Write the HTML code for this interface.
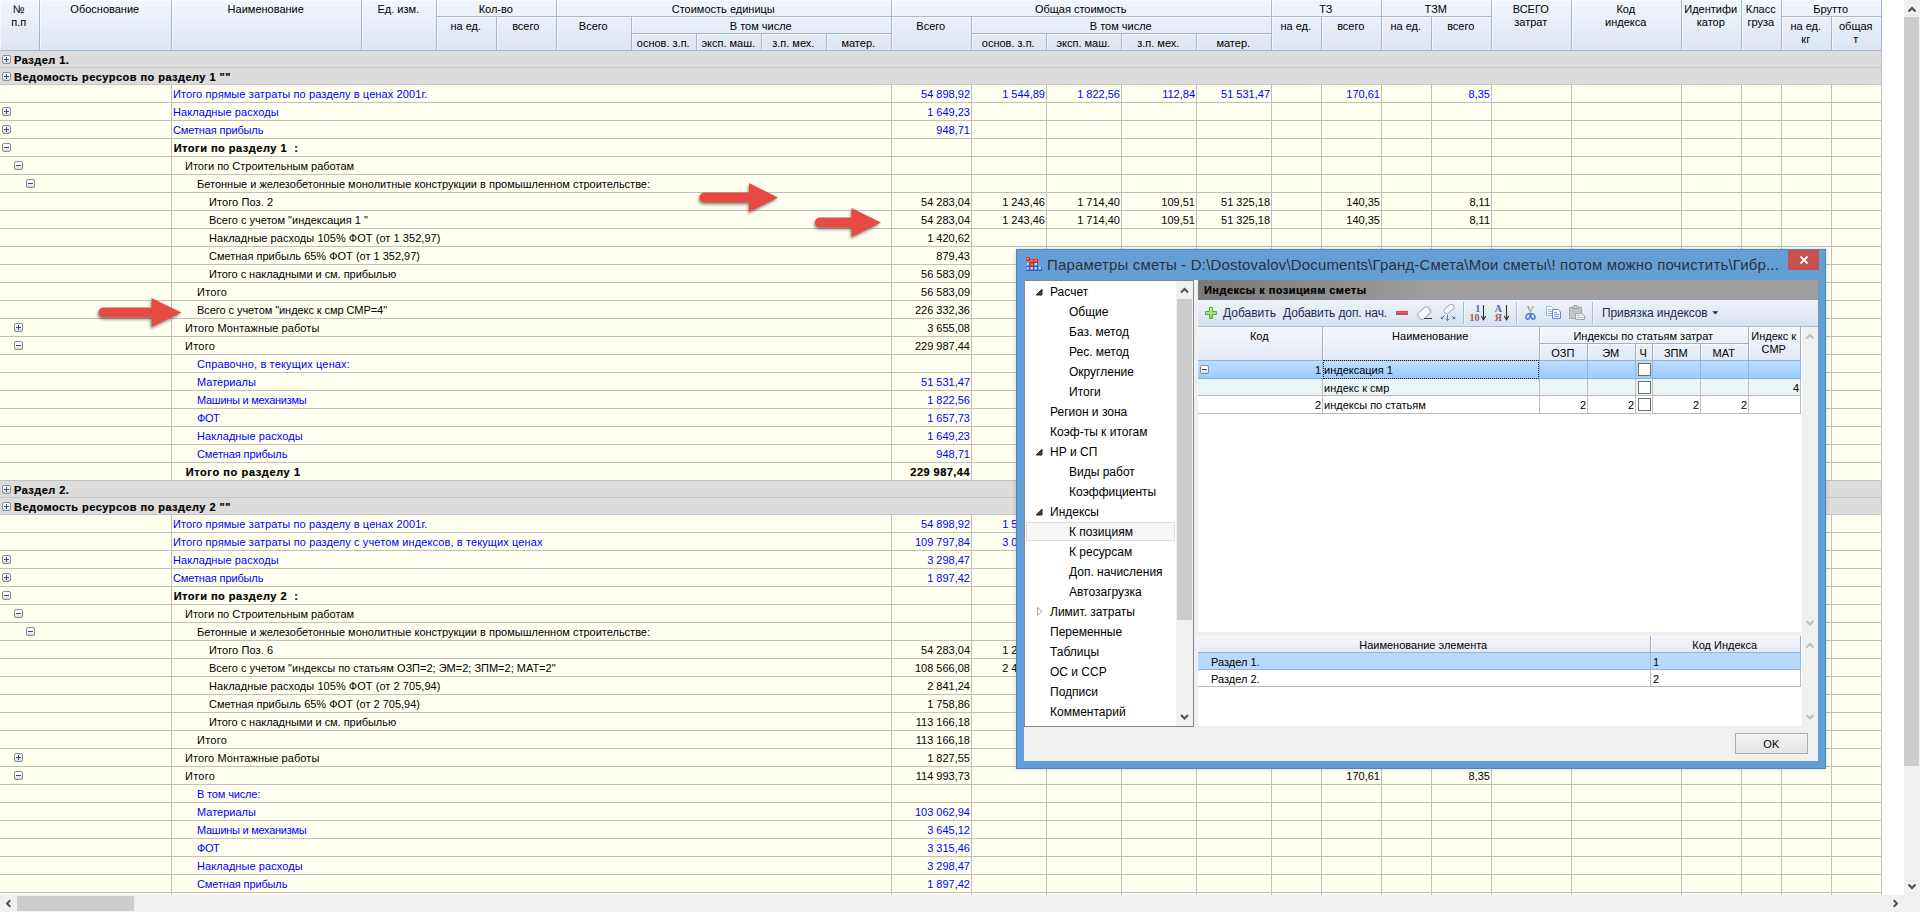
<!DOCTYPE html><html><head><meta charset="utf-8"><title>Параметры сметы</title><style>
*{box-sizing:border-box;margin:0;padding:0}
html,body{width:1920px;height:912px;overflow:hidden;background:#fff}
body{font-family:"Liberation Sans",sans-serif;font-size:11px;color:#000;position:relative}
.a{position:absolute}
.t{position:absolute;white-space:pre;line-height:13px;height:13px}
.b{font-weight:bold;letter-spacing:.46px;-webkit-text-stroke:.2px #000}
.bl{color:#0000ff}
.r{text-align:right}
.c{text-align:center}
#sheet{position:absolute;left:0;top:0;width:1904px;height:895px;overflow:hidden;background:#fff}
.hc.g{background-image:linear-gradient(#f3f7fc 0%,#ecf1f9 45%,#dfe8f4 100%);background-size:100% 34px;border-color:#a3b1c6}
.hc.g2{background-size:100% 17px}
.hc{position:absolute;background:linear-gradient(#f2f6fc 0%,#eaf0f9 36%,#dbe5f2 100%) no-repeat;background-size:100% 51px;border-right:1px solid #a9b8d1;border-bottom:1px solid #a9b8d1;text-align:center;line-height:13px;color:#000;overflow:hidden;box-shadow:inset 1px 1px 0 rgba(255,255,255,.55);padding-right:1.5px}
.row{position:absolute;left:0;width:1882px;height:18px;background:#fffff0;border-bottom:1px solid #c0c0c0}
.sec{position:absolute;left:0;width:1882px;height:17px;background:#dcdcdc;border-bottom:1px solid #c6c6c6;border-right:1px solid #c0c0c0}
.vl{position:absolute;width:1px;background:#c0c0c0}
.ex{position:absolute;width:9px;height:9px;border:1px solid #8e8e8e;border-radius:2px;background:linear-gradient(#ffffff 40%,#d8d8d8)}
.ex i{position:absolute;left:1px;top:3px;width:5px;height:1px;background:#274b9b}
.ex b{position:absolute;left:3px;top:1px;width:1px;height:5px;background:#274b9b}

</style></head><body><div id="sheet">
<div class="hc" style="left:0px;top:0px;width:40px;height:51px;padding-top:3px;background-position:0 0px">№<br>п.п</div>
<div class="hc" style="left:40px;top:0px;width:132px;height:51px;padding-top:3px;background-position:0 0px">Обоснование</div>
<div class="hc" style="left:172px;top:0px;width:190px;height:51px;padding-top:3px;background-position:0 0px">Наименование</div>
<div class="hc" style="left:362px;top:0px;width:75px;height:51px;padding-top:3px;background-position:0 0px">Ед. изм.</div>
<div class="hc" style="left:437px;top:0px;width:120px;height:17px;padding-top:3px;background-position:0 0px">Кол-во</div>
<div class="hc" style="left:437px;top:17px;width:60px;height:34px;padding-top:3px;background-position:0 -17px">на ед.</div>
<div class="hc" style="left:497px;top:17px;width:60px;height:34px;padding-top:3px;background-position:0 -17px">всего</div>
<div class="hc" style="left:557px;top:0px;width:335px;height:17px;padding-top:3px;background-position:0 0px">Стоимость единицы</div>
<div class="hc" style="left:557px;top:17px;width:75px;height:34px;padding-top:3px;background-position:0 -17px">Всего</div>
<div class="hc" style="left:632px;top:17px;width:260px;height:17px;padding-top:3px;background-position:0 -17px">В том числе</div>
<div class="hc" style="left:632px;top:34px;width:65px;height:17px;padding-top:3px;background-position:0 -34px">основ. з.п.</div>
<div class="hc" style="left:697px;top:34px;width:65px;height:17px;padding-top:3px;background-position:0 -34px">эксп. маш.</div>
<div class="hc" style="left:762px;top:34px;width:65px;height:17px;padding-top:3px;background-position:0 -34px">з.п. мех.</div>
<div class="hc" style="left:827px;top:34px;width:65px;height:17px;padding-top:3px;background-position:0 -34px">матер.</div>
<div class="hc" style="left:892px;top:0px;width:380px;height:17px;padding-top:3px;background-position:0 0px">Общая стоимость</div>
<div class="hc" style="left:892px;top:17px;width:80px;height:34px;padding-top:3px;background-position:0 -17px">Всего</div>
<div class="hc" style="left:972px;top:17px;width:300px;height:17px;padding-top:3px;background-position:0 -17px">В том числе</div>
<div class="hc" style="left:972px;top:34px;width:75px;height:17px;padding-top:3px;background-position:0 -34px">основ. з.п.</div>
<div class="hc" style="left:1047px;top:34px;width:75px;height:17px;padding-top:3px;background-position:0 -34px">эксп. маш.</div>
<div class="hc" style="left:1122px;top:34px;width:75px;height:17px;padding-top:3px;background-position:0 -34px">з.п. мех.</div>
<div class="hc" style="left:1197px;top:34px;width:75px;height:17px;padding-top:3px;background-position:0 -34px">матер.</div>
<div class="hc" style="left:1272px;top:0px;width:110px;height:17px;padding-top:3px;background-position:0 0px">ТЗ</div>
<div class="hc" style="left:1272px;top:17px;width:50px;height:34px;padding-top:3px;background-position:0 -17px">на ед.</div>
<div class="hc" style="left:1322px;top:17px;width:60px;height:34px;padding-top:3px;background-position:0 -17px">всего</div>
<div class="hc" style="left:1382px;top:0px;width:110px;height:17px;padding-top:3px;background-position:0 0px">ТЗМ</div>
<div class="hc" style="left:1382px;top:17px;width:50px;height:34px;padding-top:3px;background-position:0 -17px">на ед.</div>
<div class="hc" style="left:1432px;top:17px;width:60px;height:34px;padding-top:3px;background-position:0 -17px">всего</div>
<div class="hc" style="left:1492px;top:0px;width:80px;height:51px;padding-top:3px;background-position:0 0px">ВСЕГО<br>затрат</div>
<div class="hc" style="left:1572px;top:0px;width:110px;height:51px;padding-top:3px;background-position:0 0px">Код<br>индекса</div>
<div class="hc" style="left:1682px;top:0px;width:60px;height:51px;padding-top:3px;background-position:0 0px">Идентифи<br>катор</div>
<div class="hc" style="left:1742px;top:0px;width:40px;height:51px;padding-top:3px;background-position:0 0px">Класс<br>груза</div>
<div class="hc" style="left:1782px;top:0px;width:100px;height:17px;padding-top:3px;background-position:0 0px">Брутто</div>
<div class="hc" style="left:1782px;top:17px;width:50px;height:34px;padding-top:3px;background-position:0 -17px">на ед.<br>кг</div>
<div class="hc" style="left:1832px;top:17px;width:50px;height:34px;padding-top:3px;background-position:0 -17px">общая<br>т</div>
<div class="sec" style="top:51px"></div>
<div class="ex" style="left:2px;top:55px"><i></i><b></b></div>
<div class="t b" style="left:14px;top:54px">Раздел 1.</div>
<div class="sec" style="top:68px"></div>
<div class="ex" style="left:2px;top:72px"><i></i><b></b></div>
<div class="t b" style="left:14px;top:71px">Ведомость ресурсов по разделу 1 ""</div>
<div class="row" style="top:85px"></div>
<div class="t bl" style="left:173px;top:88px;letter-spacing:0.1px">Итого прямые затраты по разделу в ценах 2001г.</div>
<div class="t r bl" style="left:890px;width:80px;top:88px">54 898,92</div>
<div class="t r bl" style="left:965px;width:80px;top:88px">1 544,89</div>
<div class="t r bl" style="left:1040px;width:80px;top:88px">1 822,56</div>
<div class="t r bl" style="left:1115px;width:80px;top:88px">112,84</div>
<div class="t r bl" style="left:1190px;width:80px;top:88px">51 531,47</div>
<div class="t r bl" style="left:1300px;width:80px;top:88px">170,61</div>
<div class="t r bl" style="left:1410px;width:80px;top:88px">8,35</div>
<div class="row" style="top:103px"></div>
<div class="ex" style="left:2px;top:107px"><i></i><b></b></div>
<div class="t bl" style="left:173px;top:106px;letter-spacing:0.07px">Накладные расходы</div>
<div class="t r bl" style="left:890px;width:80px;top:106px">1 649,23</div>
<div class="row" style="top:121px"></div>
<div class="ex" style="left:2px;top:125px"><i></i><b></b></div>
<div class="t bl" style="left:173px;top:124px;letter-spacing:-0.12px">Сметная прибыль</div>
<div class="t r bl" style="left:890px;width:80px;top:124px">948,71</div>
<div class="row" style="top:139px"></div>
<div class="ex" style="left:2px;top:143px"><i></i></div>
<div class="t b" style="left:173.7px;top:142px;letter-spacing:0.5px">Итоги по разделу 1  :</div>
<div class="row" style="top:157px"></div>
<div class="ex" style="left:14px;top:161px"><i></i></div>
<div class="t " style="left:185px;top:160px">Итоги по Строительным работам</div>
<div class="row" style="top:175px"></div>
<div class="ex" style="left:26px;top:179px"><i></i></div>
<div class="t " style="left:197px;top:178px">Бетонные и железобетонные монолитные конструкции в промышленном строительстве:</div>
<div class="row" style="top:193px"></div>
<div class="t " style="left:209px;top:196px;letter-spacing:0.1px">Итого Поз. 2</div>
<div class="t r " style="left:890px;width:80px;top:196px">54 283,04</div>
<div class="t r " style="left:965px;width:80px;top:196px">1 243,46</div>
<div class="t r " style="left:1040px;width:80px;top:196px">1 714,40</div>
<div class="t r " style="left:1115px;width:80px;top:196px">109,51</div>
<div class="t r " style="left:1190px;width:80px;top:196px">51 325,18</div>
<div class="t r " style="left:1300px;width:80px;top:196px">140,35</div>
<div class="t r " style="left:1410px;width:80px;top:196px">8,11</div>
<div class="row" style="top:211px"></div>
<div class="t " style="left:209px;top:214px">Всего с учетом "индексация 1 "</div>
<div class="t r " style="left:890px;width:80px;top:214px">54 283,04</div>
<div class="t r " style="left:965px;width:80px;top:214px">1 243,46</div>
<div class="t r " style="left:1040px;width:80px;top:214px">1 714,40</div>
<div class="t r " style="left:1115px;width:80px;top:214px">109,51</div>
<div class="t r " style="left:1190px;width:80px;top:214px">51 325,18</div>
<div class="t r " style="left:1300px;width:80px;top:214px">140,35</div>
<div class="t r " style="left:1410px;width:80px;top:214px">8,11</div>
<div class="row" style="top:229px"></div>
<div class="t " style="left:209px;top:232px;letter-spacing:0.05px">Накладные расходы 105% ФОТ (от 1 352,97)</div>
<div class="t r " style="left:890px;width:80px;top:232px">1 420,62</div>
<div class="row" style="top:247px"></div>
<div class="t " style="left:209px;top:250px">Сметная прибыль 65% ФОТ (от 1 352,97)</div>
<div class="t r " style="left:890px;width:80px;top:250px">879,43</div>
<div class="row" style="top:265px"></div>
<div class="t " style="left:209px;top:268px;letter-spacing:-0.04px">Итого с накладными и см. прибылью</div>
<div class="t r " style="left:890px;width:80px;top:268px">56 583,09</div>
<div class="row" style="top:283px"></div>
<div class="t " style="left:197px;top:286px;letter-spacing:0.25px">Итого</div>
<div class="t r " style="left:890px;width:80px;top:286px">56 583,09</div>
<div class="row" style="top:301px"></div>
<div class="t " style="left:197px;top:304px;letter-spacing:-0.06px">Всего с учетом "индекс к смр СМР=4"</div>
<div class="t r " style="left:890px;width:80px;top:304px">226 332,36</div>
<div class="row" style="top:319px"></div>
<div class="ex" style="left:14px;top:323px"><i></i><b></b></div>
<div class="t " style="left:185px;top:322px;letter-spacing:0.1px">Итого Монтажные работы</div>
<div class="t r " style="left:890px;width:80px;top:322px">3 655,08</div>
<div class="row" style="top:337px"></div>
<div class="ex" style="left:14px;top:341px"><i></i></div>
<div class="t " style="left:185px;top:340px;letter-spacing:0.25px">Итого</div>
<div class="t r " style="left:890px;width:80px;top:340px">229 987,44</div>
<div class="row" style="top:355px"></div>
<div class="t bl" style="left:197px;top:358px;letter-spacing:0.15px">Справочно, в текущих ценах:</div>
<div class="row" style="top:373px"></div>
<div class="t bl" style="left:197px;top:376px">Материалы</div>
<div class="t r bl" style="left:890px;width:80px;top:376px">51 531,47</div>
<div class="row" style="top:391px"></div>
<div class="t bl" style="left:197px;top:394px;letter-spacing:-0.27px">Машины и механизмы</div>
<div class="t r bl" style="left:890px;width:80px;top:394px">1 822,56</div>
<div class="row" style="top:409px"></div>
<div class="t bl" style="left:197px;top:412px;letter-spacing:-0.4px">ФОТ</div>
<div class="t r bl" style="left:890px;width:80px;top:412px">1 657,73</div>
<div class="row" style="top:427px"></div>
<div class="t bl" style="left:197px;top:430px;letter-spacing:0.07px">Накладные расходы</div>
<div class="t r bl" style="left:890px;width:80px;top:430px">1 649,23</div>
<div class="row" style="top:445px"></div>
<div class="t bl" style="left:197px;top:448px;letter-spacing:-0.12px">Сметная прибыль</div>
<div class="t r bl" style="left:890px;width:80px;top:448px">948,71</div>
<div class="row" style="top:463px"></div>
<div class="t b" style="left:185.7px;top:466px;letter-spacing:0.6px">Итого по разделу 1</div>
<div class="t r b" style="left:890px;width:80px;top:466px">229 987,44</div>
<div class="sec" style="top:481px"></div>
<div class="ex" style="left:2px;top:485px"><i></i><b></b></div>
<div class="t b" style="left:14px;top:484px">Раздел 2.</div>
<div class="sec" style="top:498px"></div>
<div class="ex" style="left:2px;top:502px"><i></i><b></b></div>
<div class="t b" style="left:14px;top:501px">Ведомость ресурсов по разделу 2 ""</div>
<div class="row" style="top:515px"></div>
<div class="t bl" style="left:173px;top:518px;letter-spacing:0.1px">Итого прямые затраты по разделу в ценах 2001г.</div>
<div class="t r bl" style="left:890px;width:80px;top:518px">54 898,92</div>
<div class="t r bl" style="left:965px;width:80px;top:518px">1 544,89</div>
<div class="t r bl" style="left:1040px;width:80px;top:518px">1 822,56</div>
<div class="t r bl" style="left:1115px;width:80px;top:518px">112,84</div>
<div class="t r bl" style="left:1190px;width:80px;top:518px">51 531,47</div>
<div class="t r bl" style="left:1300px;width:80px;top:518px">170,61</div>
<div class="t r bl" style="left:1410px;width:80px;top:518px">8,35</div>
<div class="row" style="top:533px"></div>
<div class="t bl" style="left:173px;top:536px;letter-spacing:0.11px">Итого прямые затраты по разделу с учетом индексов, в текущих ценах</div>
<div class="t r bl" style="left:890px;width:80px;top:536px">109 797,84</div>
<div class="t r bl" style="left:965px;width:80px;top:536px">3 089,78</div>
<div class="t r bl" style="left:1040px;width:80px;top:536px">3 645,12</div>
<div class="t r bl" style="left:1115px;width:80px;top:536px">225,68</div>
<div class="t r bl" style="left:1190px;width:80px;top:536px">103 062,94</div>
<div class="t r bl" style="left:1300px;width:80px;top:536px">170,61</div>
<div class="t r bl" style="left:1410px;width:80px;top:536px">8,35</div>
<div class="row" style="top:551px"></div>
<div class="ex" style="left:2px;top:555px"><i></i><b></b></div>
<div class="t bl" style="left:173px;top:554px;letter-spacing:0.07px">Накладные расходы</div>
<div class="t r bl" style="left:890px;width:80px;top:554px">3 298,47</div>
<div class="row" style="top:569px"></div>
<div class="ex" style="left:2px;top:573px"><i></i><b></b></div>
<div class="t bl" style="left:173px;top:572px;letter-spacing:-0.12px">Сметная прибыль</div>
<div class="t r bl" style="left:890px;width:80px;top:572px">1 897,42</div>
<div class="row" style="top:587px"></div>
<div class="ex" style="left:2px;top:591px"><i></i></div>
<div class="t b" style="left:173.7px;top:590px;letter-spacing:0.5px">Итоги по разделу 2  :</div>
<div class="row" style="top:605px"></div>
<div class="ex" style="left:14px;top:609px"><i></i></div>
<div class="t " style="left:185px;top:608px">Итоги по Строительным работам</div>
<div class="row" style="top:623px"></div>
<div class="ex" style="left:26px;top:627px"><i></i></div>
<div class="t " style="left:197px;top:626px">Бетонные и железобетонные монолитные конструкции в промышленном строительстве:</div>
<div class="row" style="top:641px"></div>
<div class="t " style="left:209px;top:644px;letter-spacing:0.1px">Итого Поз. 6</div>
<div class="t r " style="left:890px;width:80px;top:644px">54 283,04</div>
<div class="t r " style="left:965px;width:80px;top:644px">1 243,46</div>
<div class="t r " style="left:1040px;width:80px;top:644px">1 714,40</div>
<div class="t r " style="left:1115px;width:80px;top:644px">109,51</div>
<div class="t r " style="left:1190px;width:80px;top:644px">51 325,18</div>
<div class="t r " style="left:1300px;width:80px;top:644px">140,35</div>
<div class="t r " style="left:1410px;width:80px;top:644px">8,11</div>
<div class="row" style="top:659px"></div>
<div class="t " style="left:209px;top:662px">Всего с учетом "индексы по статьям ОЗП=2; ЭМ=2; ЗПМ=2; МАТ=2"</div>
<div class="t r " style="left:890px;width:80px;top:662px">108 566,08</div>
<div class="t r " style="left:965px;width:80px;top:662px">2 486,92</div>
<div class="t r " style="left:1040px;width:80px;top:662px">3 428,80</div>
<div class="t r " style="left:1115px;width:80px;top:662px">219,02</div>
<div class="t r " style="left:1190px;width:80px;top:662px">102 650,36</div>
<div class="t r " style="left:1300px;width:80px;top:662px">140,35</div>
<div class="t r " style="left:1410px;width:80px;top:662px">8,11</div>
<div class="row" style="top:677px"></div>
<div class="t " style="left:209px;top:680px;letter-spacing:0.05px">Накладные расходы 105% ФОТ (от 2 705,94)</div>
<div class="t r " style="left:890px;width:80px;top:680px">2 841,24</div>
<div class="row" style="top:695px"></div>
<div class="t " style="left:209px;top:698px">Сметная прибыль 65% ФОТ (от 2 705,94)</div>
<div class="t r " style="left:890px;width:80px;top:698px">1 758,86</div>
<div class="row" style="top:713px"></div>
<div class="t " style="left:209px;top:716px;letter-spacing:-0.04px">Итого с накладными и см. прибылью</div>
<div class="t r " style="left:890px;width:80px;top:716px">113 166,18</div>
<div class="row" style="top:731px"></div>
<div class="t " style="left:197px;top:734px;letter-spacing:0.25px">Итого</div>
<div class="t r " style="left:890px;width:80px;top:734px">113 166,18</div>
<div class="row" style="top:749px"></div>
<div class="ex" style="left:14px;top:753px"><i></i><b></b></div>
<div class="t " style="left:185px;top:752px;letter-spacing:0.1px">Итого Монтажные работы</div>
<div class="t r " style="left:890px;width:80px;top:752px">1 827,55</div>
<div class="row" style="top:767px"></div>
<div class="ex" style="left:14px;top:771px"><i></i></div>
<div class="t " style="left:185px;top:770px;letter-spacing:0.25px">Итого</div>
<div class="t r " style="left:890px;width:80px;top:770px">114 993,73</div>
<div class="t r " style="left:1300px;width:80px;top:770px">170,61</div>
<div class="t r " style="left:1410px;width:80px;top:770px">8,35</div>
<div class="row" style="top:785px"></div>
<div class="t bl" style="left:197px;top:788px;letter-spacing:-0.15px">В том числе:</div>
<div class="row" style="top:803px"></div>
<div class="t bl" style="left:197px;top:806px">Материалы</div>
<div class="t r bl" style="left:890px;width:80px;top:806px">103 062,94</div>
<div class="row" style="top:821px"></div>
<div class="t bl" style="left:197px;top:824px;letter-spacing:-0.27px">Машины и механизмы</div>
<div class="t r bl" style="left:890px;width:80px;top:824px">3 645,12</div>
<div class="row" style="top:839px"></div>
<div class="t bl" style="left:197px;top:842px;letter-spacing:-0.4px">ФОТ</div>
<div class="t r bl" style="left:890px;width:80px;top:842px">3 315,46</div>
<div class="row" style="top:857px"></div>
<div class="t bl" style="left:197px;top:860px;letter-spacing:0.07px">Накладные расходы</div>
<div class="t r bl" style="left:890px;width:80px;top:860px">3 298,47</div>
<div class="row" style="top:875px"></div>
<div class="t bl" style="left:197px;top:878px;letter-spacing:-0.12px">Сметная прибыль</div>
<div class="t r bl" style="left:890px;width:80px;top:878px">1 897,42</div>
<div class="row" style="top:893px"></div>
<div class="t " style="left:173px;top:896px"></div>
<div class="vl" style="left:171px;top:85px;height:395px"></div>
<div class="vl" style="left:171px;top:515px;height:380px"></div>
<div class="vl" style="left:891px;top:85px;height:395px"></div>
<div class="vl" style="left:891px;top:515px;height:380px"></div>
<div class="vl" style="left:971px;top:85px;height:395px"></div>
<div class="vl" style="left:971px;top:515px;height:380px"></div>
<div class="vl" style="left:1046px;top:85px;height:395px"></div>
<div class="vl" style="left:1046px;top:515px;height:380px"></div>
<div class="vl" style="left:1121px;top:85px;height:395px"></div>
<div class="vl" style="left:1121px;top:515px;height:380px"></div>
<div class="vl" style="left:1196px;top:85px;height:395px"></div>
<div class="vl" style="left:1196px;top:515px;height:380px"></div>
<div class="vl" style="left:1271px;top:85px;height:395px"></div>
<div class="vl" style="left:1271px;top:515px;height:380px"></div>
<div class="vl" style="left:1321px;top:85px;height:395px"></div>
<div class="vl" style="left:1321px;top:515px;height:380px"></div>
<div class="vl" style="left:1381px;top:85px;height:395px"></div>
<div class="vl" style="left:1381px;top:515px;height:380px"></div>
<div class="vl" style="left:1431px;top:85px;height:395px"></div>
<div class="vl" style="left:1431px;top:515px;height:380px"></div>
<div class="vl" style="left:1491px;top:85px;height:395px"></div>
<div class="vl" style="left:1491px;top:515px;height:380px"></div>
<div class="vl" style="left:1571px;top:85px;height:395px"></div>
<div class="vl" style="left:1571px;top:515px;height:380px"></div>
<div class="vl" style="left:1681px;top:85px;height:395px"></div>
<div class="vl" style="left:1681px;top:515px;height:380px"></div>
<div class="vl" style="left:1741px;top:85px;height:395px"></div>
<div class="vl" style="left:1741px;top:515px;height:380px"></div>
<div class="vl" style="left:1781px;top:85px;height:395px"></div>
<div class="vl" style="left:1781px;top:515px;height:380px"></div>
<div class="vl" style="left:1831px;top:85px;height:395px"></div>
<div class="vl" style="left:1831px;top:515px;height:380px"></div>
<div class="vl" style="left:1881px;top:85px;height:395px"></div>
<div class="vl" style="left:1881px;top:515px;height:380px"></div>
</div>
<!-- scrollbars of main sheet -->
<div class="a" style="left:1904px;top:0;width:16px;height:895px;background:#f0f0f0"></div>
<div class="a" style="left:1904px;top:17px;width:15px;height:749px;background:#cdcdcd"></div>
<svg class="a" style="left:1904px;top:0" width="16" height="17"><path d="M4.5 11.5 L8 8 L11.5 11.5" fill="none" stroke="#505050" stroke-width="2"/></svg>
<svg class="a" style="left:1904px;top:878px" width="16" height="17"><path d="M4.5 6.5 L8 10 L11.5 6.5" fill="none" stroke="#505050" stroke-width="2"/></svg>
<div class="a" style="left:0;top:895px;width:1920px;height:17px;background:#f0f0f0"></div>
<div class="a" style="left:17px;top:896px;width:117px;height:15px;background:#cdcdcd"></div>
<svg class="a" style="left:0;top:895px" width="17" height="17"><path d="M10.3 5.3 L7 8.5 L10.3 11.7" fill="none" stroke="#505050" stroke-width="1.9"/></svg>
<svg class="a" style="left:1887px;top:895px" width="17" height="17"><path d="M6.7 5.3 L10 8.5 L6.7 11.7" fill="none" stroke="#505050" stroke-width="1.9"/></svg>

<!-- red arrows -->
<svg class="a" style="left:0;top:0;filter:drop-shadow(-1px 2px 1.5px rgba(40,50,30,.55))" width="1000" height="400">
 <g fill="#e84a43" stroke="none">
  <path d="M704.5 192.5 H749 V183 L778 197.5 L749 212 V202.5 H704.5 A5 5 0 0 1 704.5 192.5Z"/>
  <path d="M820 217.5 H851.5 V208 L881 222.5 L851.5 237 V227.5 H820 A5 5 0 0 1 820 217.5Z"/>
  <path d="M103.5 307.5 H151.5 V298 L181.5 312.5 L151.5 327 V317.5 H103.5 A5 5 0 0 1 103.5 307.5Z"/>
 </g>
</svg>

<!-- dialog -->
<div id="dlg" class="a" style="left:1016px;top:249px;width:810px;height:520px;background:#639fd5;border:1px solid #4b86c0;box-shadow:0 0 5px rgba(0,0,0,.18)"></div>
<svg class="a" style="left:1026px;top:257px" width="16" height="14" shape-rendering="crispEdges">
 <rect x="0" y="0" width="4" height="4" fill="#e8452c"/>
 <rect x="4" y="2" width="8" height="4" fill="#e8452c"/>
 <rect x="4" y="6" width="4" height="4" fill="#e8452c"/>
 <rect x="0" y="6" width="4" height="4" fill="#6f9cec"/>
 <rect x="8" y="6" width="4" height="4" fill="#6f9cec"/>
 <rect x="0" y="10" width="16" height="4" fill="#6f9cec"/>
 <path d="M0 13.5H16 M3.5 6V14 M7.5 10V14 M11.5 6V14 M15.5 10V14 M0 9.5H4 M8 9.5H12" stroke="#2f5fb8" stroke-width="1"/>
 <path d="M3.5 0V4 M0 3.5H4 M7.5 2V10 M11.5 2V6 M4 5.5H12 M4 9.5H8" stroke="#c4331c" stroke-width="1"/>
 <path d="M1 7.5H3 M9 7.5H11 M1 11.5H3 M5 11.5H7 M9 11.5H11 M13 11.5H15 M1 6.5H3 M9 6.5H11 M1 10.5H3 M5 10.5H7 M9 10.5H11 M13 10.5H15" stroke="#b9d2fa" stroke-width="1"/>
 <path d="M1 1.5H3 M5 3.5H7 M9 3.5H11 M5 7.5H7" stroke="#f4836a" stroke-width="1"/>
</svg>
<div class="t" style="left:1047px;top:256px;font-size:15px;line-height:18px;height:18px;color:#2d313c;letter-spacing:.17px">Параметры сметы - D:\Dostovalov\Documents\Гранд-Смета\Мои сметы\! потом можно почистить\Гибр...</div>
<div class="a" style="left:1788px;top:250px;width:31px;height:20px;background:#c75050"></div>
<svg class="a" style="left:1788px;top:250px" width="31" height="20"><path d="M12.5 6.5 L19.5 13.5 M19.5 6.5 L12.5 13.5" stroke="#fff" stroke-width="1.8"/></svg>

<!-- client -->
<div class="a" style="left:1024px;top:280px;width:794px;height:481px;background:#f0f0f0"></div>

<!-- tree -->
<div id="tree" class="a" style="left:1024px;top:280px;width:170px;height:447px;background:#fff;border:1px solid #828790;font-size:12px"></div>
<div class="a" style="left:1176px;top:281px;width:17px;height:445px;background:#f0f0f0"></div>
<div class="a" style="left:1177px;top:299px;width:15px;height:321px;background:#cdcdcd"></div>
<svg class="a" style="left:1176px;top:281px" width="17" height="17"><path d="M5 11.5 L8.5 8 L12 11.5" fill="none" stroke="#505050" stroke-width="2"/></svg>
<svg class="a" style="left:1176px;top:709px" width="17" height="17"><path d="M5 6 L8.5 9.5 L12 6" fill="none" stroke="#505050" stroke-width="2"/></svg>
<div class="a" style="left:1026px;top:522px;width:149px;height:19px;background:#f7f7f7;border:1px solid #dedede"></div>
<div class="t" style="left:1050px;top:284px;font-size:12px;line-height:16px;height:16px">Расчет</div>
<svg class="a" style="left:1035px;top:288px" width="9" height="9"><path d="M7 1.2 V7 H1.2 Z" fill="#3c3c3c" stroke="#262626" stroke-width="1" stroke-linejoin="round"/></svg>
<div class="t" style="left:1069px;top:304px;font-size:12px;line-height:16px;height:16px">Общие</div>
<div class="t" style="left:1069px;top:324px;font-size:12px;line-height:16px;height:16px">Баз. метод</div>
<div class="t" style="left:1069px;top:344px;font-size:12px;line-height:16px;height:16px">Рес. метод</div>
<div class="t" style="left:1069px;top:364px;font-size:12px;line-height:16px;height:16px">Округление</div>
<div class="t" style="left:1069px;top:384px;font-size:12px;line-height:16px;height:16px">Итоги</div>
<div class="t" style="left:1050px;top:404px;font-size:12px;line-height:16px;height:16px">Регион и зона</div>
<div class="t" style="left:1050px;top:424px;font-size:12px;line-height:16px;height:16px">Коэф-ты к итогам</div>
<div class="t" style="left:1050px;top:444px;font-size:12px;line-height:16px;height:16px">НР и СП</div>
<svg class="a" style="left:1035px;top:448px" width="9" height="9"><path d="M7 1.2 V7 H1.2 Z" fill="#3c3c3c" stroke="#262626" stroke-width="1" stroke-linejoin="round"/></svg>
<div class="t" style="left:1069px;top:464px;font-size:12px;line-height:16px;height:16px">Виды работ</div>
<div class="t" style="left:1069px;top:484px;font-size:12px;line-height:16px;height:16px">Коэффициенты</div>
<div class="t" style="left:1050px;top:504px;font-size:12px;line-height:16px;height:16px">Индексы</div>
<svg class="a" style="left:1035px;top:508px" width="9" height="9"><path d="M7 1.2 V7 H1.2 Z" fill="#3c3c3c" stroke="#262626" stroke-width="1" stroke-linejoin="round"/></svg>
<div class="t" style="left:1069px;top:524px;font-size:12px;line-height:16px;height:16px">К позициям</div>
<div class="t" style="left:1069px;top:544px;font-size:12px;line-height:16px;height:16px">К ресурсам</div>
<div class="t" style="left:1069px;top:564px;font-size:12px;line-height:16px;height:16px">Доп. начисления</div>
<div class="t" style="left:1069px;top:584px;font-size:12px;line-height:16px;height:16px">Автозагрузка</div>
<div class="t" style="left:1050px;top:604px;font-size:12px;line-height:16px;height:16px">Лимит. затраты</div>
<svg class="a" style="left:1036px;top:606px" width="9" height="11"><path d="M1.5 1.5 L6 5.5 L1.5 9.5 Z" fill="#fff" stroke="#a0a0a0" stroke-width="1"/></svg>
<div class="t" style="left:1050px;top:624px;font-size:12px;line-height:16px;height:16px">Переменные</div>
<div class="t" style="left:1050px;top:644px;font-size:12px;line-height:16px;height:16px">Таблицы</div>
<div class="t" style="left:1050px;top:664px;font-size:12px;line-height:16px;height:16px">ОС и ССР</div>
<div class="t" style="left:1050px;top:684px;font-size:12px;line-height:16px;height:16px">Подписи</div>
<div class="t" style="left:1050px;top:704px;font-size:12px;line-height:16px;height:16px">Комментарий</div>

<!-- right panel -->
<div class="a" style="left:1198px;top:280px;width:620px;height:20px;background:linear-gradient(90deg,#787878,#9d9d9d 37%,#9d9d9d)"></div>
<div class="t b" style="left:1204px;top:284px;letter-spacing:.45px">Индексы к позициям сметы</div>
<div class="a" style="left:1198px;top:300px;width:620px;height:27px;background:linear-gradient(#eef3fa,#e3ebf6 45%,#d7e2f1);border-bottom:1px solid #a6bedb"></div>
<svg class="a" style="left:1205px;top:307px" width="12" height="12"><defs><linearGradient id="pg" x1="0" y1="0" x2="0" y2="1"><stop offset="0" stop-color="#d2f4b4"/><stop offset="1" stop-color="#7fd04e"/></linearGradient></defs><path d="M4.5 .5 H7.5 V4.5 H11.5 V7.5 H7.5 V11.5 H4.5 V7.5 H.5 V4.5 H4.5 Z" fill="url(#pg)" stroke="#55ad32" stroke-width="1"/></svg>
<div class="t" style="left:1223px;top:305px;font-size:12px;line-height:16px;height:16px;color:#1e2a55">Добавить</div>
<div class="t" style="left:1283px;top:305px;font-size:12px;line-height:16px;height:16px;color:#1e2a55;letter-spacing:-.1px">Добавить доп. нач.</div>
<div class="a" style="left:1396px;top:311px;width:12px;height:4px;background:linear-gradient(#f0666a,#dc3c42);border:1px solid #d8474c"></div>
<svg class="a" style="left:1417px;top:305px" width="17" height="16"><g transform="rotate(-42 7.5 8)"><rect x=".5" y="4" width="13.5" height="8" rx="3" fill="#fdfdff" stroke="#9fb0cc"/><path d="M8.5 11.3 H11.5 Q13.3 11 13.4 9 L13.4 7" stroke="#b9bfca" fill="none"/></g><path d="M7 13.5 H15" stroke="#3a3a3a" stroke-width="1"/></svg>
<svg class="a" style="left:1440px;top:304px" width="17" height="18"><g transform="rotate(-40 9 5)"><rect x="3.5" y="2.2" width="11" height="5.6" rx="2.5" fill="#fdfdff" stroke="#9fb0cc"/></g><path d="M7.5 11 V16.5 M5.8 14.8 L7.5 16.7 L9.2 14.8 M4.5 11.5 L1.3 14.7 M1.3 12.6 V14.7 H3.4 M11.5 11.5 L14.7 14.7 M14.7 12.6 V14.7 H12.6" fill="none" stroke="#5f7296" stroke-width="1"/></svg>
<div class="a" style="left:1463px;top:302px;width:1px;height:22px;background:#a9bcda"></div><div class="a" style="left:1464px;top:302px;width:1px;height:22px;background:#f4f8fd"></div>
<div class="a" style="left:1516px;top:302px;width:1px;height:22px;background:#a9bcda"></div><div class="a" style="left:1517px;top:302px;width:1px;height:22px;background:#f4f8fd"></div>
<div class="a" style="left:1592px;top:302px;width:1px;height:22px;background:#a9bcda"></div><div class="a" style="left:1593px;top:302px;width:1px;height:22px;background:#f4f8fd"></div>
<svg class="a" style="left:1469px;top:304px" width="18" height="18"><text x="6.2" y="7.8" font-family="Liberation Serif" font-weight="bold" font-size="10" fill="#4d6cab">1</text><text x="0.6" y="17" font-family="Liberation Serif" font-weight="bold" font-size="10" fill="#a8555b">10</text><path d="M14.5 1 V15.5 M12.3 12 L14.5 15.8 L16.7 12" stroke="#333" stroke-width="1.1" fill="none"/></svg>
<svg class="a" style="left:1494px;top:304px" width="18" height="18"><text x="0.8" y="8.3" font-family="Liberation Serif" font-weight="bold" font-size="10" fill="#4d6cab">A</text><text x="0.8" y="17" font-family="Liberation Serif" font-weight="bold" font-size="10" fill="#a8555b">Я</text><path d="M12.5 1 V15.5 M10.3 12 L12.5 15.8 L14.7 12" stroke="#333" stroke-width="1.1" fill="none"/></svg>
<svg class="a" style="left:1524px;top:304px" width="14" height="18"><path d="M3 2 L4.8 2 L7.6 9.6 L6.2 10 Z" fill="#9fa4ad"/><path d="M10 2 L8.2 2 L5.4 9.6 L6.8 10 Z" fill="#b4b8c0"/><ellipse cx="4.1" cy="12.4" rx="1.9" ry="2.8" transform="rotate(22 4.1 12.4)" fill="none" stroke="#5278d2" stroke-width="1.5"/><ellipse cx="8.9" cy="12.4" rx="1.9" ry="2.8" transform="rotate(-22 8.9 12.4)" fill="none" stroke="#5278d2" stroke-width="1.5"/></svg>
<svg class="a" style="left:1546px;top:306px" width="16" height="14"><path d="M.5 .5 H5.5 L7.5 2.5 V9.5 H.5Z" fill="#fff" stroke="#9db3d8"/><path d="M2 3.5H5M2 5.5H6M2 7.5H6" stroke="#8fb0e6"/><path d="M6.5 3.5 H12 L14.5 6 V12.5 H6.5Z" fill="#fff" stroke="#5f86c8"/><path d="M8 6.5H11M8 8.5H13M8 10.5H13" stroke="#6a98e6"/></svg>
<svg class="a" style="left:1569px;top:305px" width="17" height="16"><path d="M.5 2.5 H12.5 V13.5 H.5Z" fill="#c4c4c4" stroke="#a6a6a6"/><path d="M3.5 3.5 V1.8 H5.2 V.6 H7.8 V1.8 H9.5 V3.5Z" fill="#d9d9d9" stroke="#9a9a9a"/><path d="M6.5 8.5 H13 L15.5 11 V14.5 H6.5Z" fill="#ededed" stroke="#a4a4a4"/><path d="M8 10.5H11M8 12.5H14" stroke="#bdbdbd"/></svg>
<div class="t" style="left:1602px;top:305px;font-size:12px;line-height:16px;height:16px;color:#1e2a55;letter-spacing:-.1px">Привязка индексов</div>
<svg class="a" style="left:1712px;top:311px" width="7" height="4"><path d="M.3 .2H6.3L3.3 3.4Z" fill="#1e2a55"/></svg>
<!-- grid1 -->
<div class="a" style="left:1198px;top:327px;width:604px;height:305px;background:#fff"></div>
<div class="a" style="left:1802px;top:327px;width:16px;height:305px;background:#f0f0f0"></div>
<svg class="a" style="left:1802px;top:327px" width="16" height="17"><path d="M4.5 11.5 L8 8 L11.5 11.5" fill="none" stroke="#bfbfbf" stroke-width="2"/></svg>
<svg class="a" style="left:1802px;top:615px" width="16" height="17"><path d="M4.5 6 L8 9.5 L11.5 6" fill="none" stroke="#bfbfbf" stroke-width="2"/></svg>
<div class="hc g" style="left:1198px;top:327px;width:125px;height:34px;padding-top:3px;background-position:0 0px">Код</div>
<div class="hc g" style="left:1323px;top:327px;width:217px;height:34px;padding-top:3px;background-position:0 0px">Наименование</div>
<div class="hc g" style="left:1540px;top:327px;width:209px;height:17px;padding-top:3px;background-position:0 0px">Индексы по статьям затрат</div>
<div class="hc g" style="left:1540px;top:344px;width:48px;height:17px;padding-top:3px;background-position:0 -17px">ОЗП</div>
<div class="hc g" style="left:1588px;top:344px;width:48px;height:17px;padding-top:3px;background-position:0 -17px">ЭМ</div>
<div class="hc g" style="left:1636px;top:344px;width:17px;height:17px;padding-top:3px;background-position:0 -17px">Ч</div>
<div class="hc g" style="left:1653px;top:344px;width:48px;height:17px;padding-top:3px;background-position:0 -17px">ЗПМ</div>
<div class="hc g" style="left:1701px;top:344px;width:48px;height:17px;padding-top:3px;background-position:0 -17px">МАТ</div>
<div class="hc g" style="left:1749px;top:327px;width:52px;height:34px;padding-top:3px;background-position:0 0px">Индекс к<br>СМР</div>
<div class="a" style="left:1198px;top:361px;width:603px;height:18px;background:linear-gradient(#bcdeff,#9ccbfb);border-bottom:1px solid #7fb2ea"></div>
<div class="a" style="left:1198px;top:379px;width:603px;height:17px;background:#ebf5f5;border-bottom:1px solid #b9b9b9"></div>
<div class="a" style="left:1198px;top:396px;width:603px;height:18px;background:#fff;border-bottom:1px solid #b9b9b9"></div>
<div class="a" style="left:1322px;top:361px;width:1px;height:17px;background:#8db9ea"></div>
<div class="a" style="left:1322px;top:379px;width:1px;height:35px;background:#bdbdbd"></div>
<div class="a" style="left:1539px;top:361px;width:1px;height:17px;background:#8db9ea"></div>
<div class="a" style="left:1539px;top:379px;width:1px;height:35px;background:#bdbdbd"></div>
<div class="a" style="left:1587px;top:361px;width:1px;height:17px;background:#8db9ea"></div>
<div class="a" style="left:1587px;top:379px;width:1px;height:35px;background:#bdbdbd"></div>
<div class="a" style="left:1635px;top:361px;width:1px;height:17px;background:#8db9ea"></div>
<div class="a" style="left:1635px;top:379px;width:1px;height:35px;background:#bdbdbd"></div>
<div class="a" style="left:1652px;top:361px;width:1px;height:17px;background:#8db9ea"></div>
<div class="a" style="left:1652px;top:379px;width:1px;height:35px;background:#bdbdbd"></div>
<div class="a" style="left:1700px;top:361px;width:1px;height:17px;background:#8db9ea"></div>
<div class="a" style="left:1700px;top:379px;width:1px;height:35px;background:#bdbdbd"></div>
<div class="a" style="left:1748px;top:361px;width:1px;height:17px;background:#8db9ea"></div>
<div class="a" style="left:1748px;top:379px;width:1px;height:35px;background:#bdbdbd"></div>
<div class="a" style="left:1800px;top:361px;width:1px;height:17px;background:#8db9ea"></div>
<div class="a" style="left:1800px;top:379px;width:1px;height:35px;background:#bdbdbd"></div>
<div class="a" style="left:1323px;top:360px;width:216px;height:19px;border:1px dotted #222"></div>
<div class="ex" style="left:1200px;top:365px"><i></i></div>
<div class="t r" style="left:1261px;width:60px;top:364px">1</div>
<div class="t" style="left:1324px;top:364px">индексация 1</div>
<div class="t" style="left:1324px;top:382px">индекс к смр</div>
<div class="t r" style="left:1739px;width:60px;top:382px">4</div>
<div class="t r" style="left:1261px;width:60px;top:399px">2</div>
<div class="t" style="left:1324px;top:399px">индексы по статьям</div>
<div class="t r" style="left:1526px;width:60px;top:399px">2</div>
<div class="t r" style="left:1574px;width:60px;top:399px">2</div>
<div class="t r" style="left:1639px;width:60px;top:399px">2</div>
<div class="t r" style="left:1687px;width:60px;top:399px">2</div>
<div class="a" style="left:1638px;top:363px;width:13px;height:13px;background:#fff;border:1px solid #6e6e6e"></div>
<div class="a" style="left:1638px;top:381px;width:13px;height:13px;background:#fff;border:1px solid #6e6e6e"></div>
<div class="a" style="left:1638px;top:398px;width:13px;height:13px;background:#fff;border:1px solid #6e6e6e"></div>
<!-- grid2 -->
<div class="a" style="left:1198px;top:636px;width:604px;height:90px;background:#fff"></div>
<div class="a" style="left:1802px;top:636px;width:16px;height:90px;background:#f0f0f0"></div>
<svg class="a" style="left:1802px;top:636px" width="16" height="17"><path d="M4.5 11.5 L8 8 L11.5 11.5" fill="none" stroke="#bfbfbf" stroke-width="2"/></svg>
<svg class="a" style="left:1802px;top:709px" width="16" height="17"><path d="M4.5 6 L8 9.5 L11.5 6" fill="none" stroke="#bfbfbf" stroke-width="2"/></svg>
<div class="hc g g2" style="left:1198px;top:636px;width:453px;height:17px;padding-top:3px;background-position:0 0px">Наименование элемента</div>
<div class="hc g g2" style="left:1651px;top:636px;width:150px;height:17px;padding-top:3px;background-position:0 0px">Код Индекса</div>
<div class="a" style="left:1198px;top:653px;width:603px;height:17px;background:#b9d9fc;border-bottom:1px solid #86b5ea"></div>
<div class="a" style="left:1198px;top:670px;width:603px;height:17px;background:#fff;border-bottom:1px solid #b9b9b9"></div>
<div class="a" style="left:1650px;top:653px;width:1px;height:16px;background:#8db9ea"></div><div class="a" style="left:1800px;top:653px;width:1px;height:16px;background:#8db9ea"></div>
<div class="a" style="left:1650px;top:670px;width:1px;height:16px;background:#bdbdbd"></div><div class="a" style="left:1800px;top:670px;width:1px;height:16px;background:#bdbdbd"></div>
<div class="t" style="left:1211px;top:656px">Раздел 1.</div>
<div class="t" style="left:1653px;top:656px">1</div>
<div class="t" style="left:1211px;top:673px">Раздел 2.</div>
<div class="t" style="left:1653px;top:673px">2</div>
<!-- OK -->
<div class="a c" style="left:1735px;top:733px;width:73px;height:21px;border:1px solid #acacac;background:linear-gradient(#f2f2f2,#e4e4e4);font-size:11px;line-height:21px;letter-spacing:.3px">OK</div>

</body></html>
